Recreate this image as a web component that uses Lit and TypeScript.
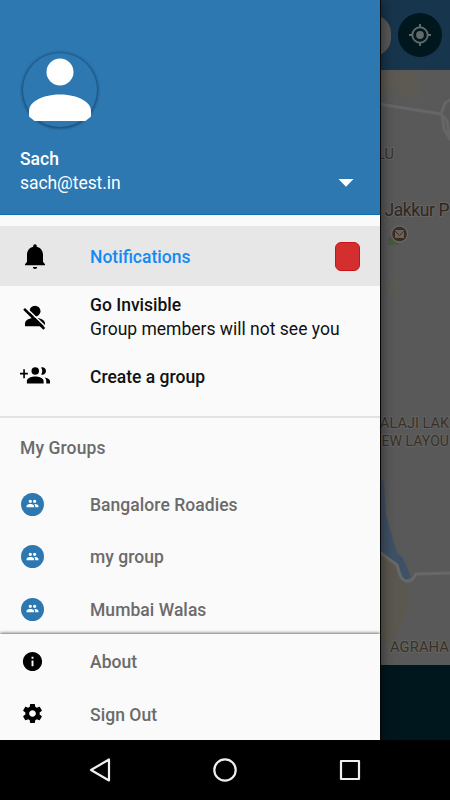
import { LitElement, html, css, svg } from "lit";
import { customElement } from "lit/decorators.js";

const groupGlyph = svg`<path d="M16 11c1.66 0 2.99-1.34 2.99-3S17.66 5 16 5s-3 1.34-3 3 1.34 3 3 3zm-8 0c1.66 0 2.99-1.34 2.99-3S9.66 5 8 5 5 6.34 5 8s1.34 3 3 3zm0 2c-2.33 0-7 1.17-7 3.5V19h14v-2.5C15 14.17 10.33 13 8 13zm8 0c-.29 0-.62.02-.97.05 1.16.84 1.97 1.97 1.97 3.45V19h6v-2.5c0-2.33-4.67-3.5-7-3.5z"/>`;

const icons = {
  bell: svg`<path d="M12 2.500c-.9 0-1.400.6-1.400 1.400v.7C7.600 5.300 5.600 7.800 5.600 11v5.500L4 18.500v.9h16v-.9l-1.600-2V11c0-3.200-2-5.700-5-6.400v-.7c0-.8-.5-1.400-1.400-1.400zM10.300 20.700h3.400c0 .9-.7 1.600-1.700 1.600s-1.700-.7-1.700-1.600z"/>`,
  personOff: svg`<circle cx="12" cy="8.100" r="4.400"/><path d="M12 13.400c-2.670 0-8 1.340-8 4.400v2.400h16v-2.400c0-3.060-5.330-4.400-8-4.400z"/><path d="M4.600 5.200 21.400 21.400" stroke="#fafafa" stroke-width="1.300" fill="none"/><path d="M3.300 6.300 19.400 22.300" stroke="#000" stroke-width="2.100" fill="none"/>`,
  groupAdd: svg`<path d="M6.300 9.400H3.900V6.500H2.600v2.900H0v1.400h2.600v2.900h1.300v-2.900h2.400zM17.800 11c1.660 0 2.990-1.340 2.990-3S19.460 5 17.800 5c-.32 0-.63.05-.91.14.57.81.9 1.790.9 2.860s-.34 2.040-.9 2.860c.28.09.59.14.91.14z" /><circle cx="12.200" cy="8" r="3"/><path d="M19.620 13.160c.83.73 1.380 1.660 1.380 2.840v2h3v-2c0-1.540-2.370-2.490-4.380-2.840zM12.200 12.300c-2.400 0-6.700 1-6.700 3.700v2h13.400v-2c0-2.700-4.300-3.700-6.700-3.700z"/>`,
  info: svg`<path d="M12 2C6.480 2 2 6.480 2 12s4.480 10 10 10 10-4.480 10-10S17.520 2 12 2zm1 15h-2v-6h2v6zm0-8h-2V7h2v2z"/>`,
  gear: svg`<path d="M19.430 12.980c.04-.32.07-.64.07-.98s-.03-.66-.07-.98l2.110-1.650c.19-.15.24-.42.12-.64l-2-3.460c-.12-.22-.39-.3-.61-.22l-2.490 1c-.52-.4-1.080-.73-1.690-.98l-.38-2.650C14.460 2.180 14.250 2 14 2h-4c-.25 0-.46.18-.49.42l-.38 2.650c-.61.25-1.170.59-1.690.98l-2.490-1c-.23-.09-.49 0-.61.22l-2 3.460c-.13.22-.07.49.12.64l2.110 1.650c-.04.32-.07.65-.07.98s.03.66.07.98l-2.110 1.650c-.19.15-.24.42-.12.64l2 3.460c.12.22.39.3.61.22l2.490-1c.52.4 1.080.73 1.690.98l.38 2.650c.03.24.24.42.49.42h4c.25 0 .46-.18.49-.42l.38-2.650c.61-.25 1.170-.59 1.690-.98l2.490 1c.23.09.49 0 .61-.22l2-3.460c.12-.22.07-.49-.12-.64l-2.110-1.650zM12 15.500c-1.930 0-3.500-1.570-3.500-3.500s1.570-3.500 3.500-3.500 3.500 1.570 3.500 3.500-1.570 3.500-3.500 3.500z"/>`,
};

@customElement("map-backdrop")
class MapBackdrop extends LitElement {
  static styles = css`
    :host { display: flex; flex-direction: column; height: 740px; background: #00171d; overflow: hidden; }
    .bar { height: 70px; display: flex; align-items: center; justify-content: flex-end; gap: 7px; padding-right: 8px; box-sizing: border-box; background: #17354d; }
    .search { width: 350px; height: 41px; border-radius: 18px; background: #585858; }
    .locate { width: 44px; height: 44px; border-radius: 50%; background: #00171d; display: flex; align-items: center; justify-content: center; }
    svg { display: block; }
    .map { height: 595px; width: 450px; }
    text { font-family: Roboto, sans-serif; paint-order: stroke; stroke: #646464; stroke-width: 2px; stroke-linejoin: round; fill: #3a3125; }
    .place { fill: #35261d; }
  `;
  render() {
    return html`
      <div class="bar">
        <div class="search"></div>
        <div class="locate">
          <svg width="24" height="24" viewBox="0 0 24 24" fill="none" stroke="#626a6c" stroke-width="1.900">
            <circle cx="12" cy="12" r="7.700" /><circle cx="12" cy="12" r="3.900" fill="#626a6c" stroke="none" />
            <path d="M12 1v4M12 19v4M1 12h4M19 12h4" />
          </svg>
        </div>
      </div>
      <svg class="map" viewBox="0 70 450 595">
        <rect y="70" width="450" height="595" fill="#595959" />
        <path d="M370 70H418V100L398 95 397 87H392L388 93 370 91Z" fill="#5d5a53" />
        <path d="M370 100 385 105 441 114 447 121 450 140" fill="none" stroke="#666" stroke-width="3" />
        <path d="M441 114 445 103 452 99M442 115 444 129 452 142" fill="none" stroke="#666" stroke-width="3" />
        <path d="M391 278H399V293H391Z" fill="#5b5a54" />
        <path d="M370 553H382L399 566 407 581 409 605 392 645H370Z" fill="#5b5850" />
        <path d="M378 474 384 482 386 515 397 553 403 558 411 577 405 581 399 576 397 565 378 550Z" fill="#3f5166" />
        <path d="M378 551 397 565 400 575Q403 582 409 581 413 580 416 574L450 573" fill="none" stroke="#686868" stroke-width="3" />
        <path d="M388 238 396 234 399 245 388 245Z" fill="#4b573f" />
        <text x="377" y="159" font-size="14.500">LU</text>
        <text class="place" x="384.500" y="216" font-size="17.500" textLength="65" lengthAdjust="spacing">Jakkur P</text>
        <circle cx="399.500" cy="234" r="8" fill="#3e2b22" stroke="#666" stroke-width="1.500" />
        <rect x="395" y="230" width="9" height="8" fill="#6a625e" />
        <path d="M395 231 399.500 235.500 404 231" fill="none" stroke="#3e2b22" stroke-width="1" />
        <text x="380" y="428" font-size="15.500" textLength="69" lengthAdjust="spacingAndGlyphs">ALAJI LAK</text>
        <text x="381.500" y="446" font-size="15.500" textLength="67.500" lengthAdjust="spacingAndGlyphs">EW LAYOU</text>
        <text x="390" y="651.500" font-size="15.500" textLength="59" lengthAdjust="spacingAndGlyphs">AGRAHA</text>
      </svg>
    `;
  }
}

@customElement("nav-drawer")
class NavDrawer extends LitElement {
  static styles = css`
    :host { display: flex; flex-direction: column; width: 380px; height: 740px; background: #fafafa; box-shadow: 0 0 14px rgba(0, 0, 0, 0.6), 1px 0 0 #0a0a0a; font: 500 17.500px/24px Roboto, sans-serif; color: #111; }
    svg { display: block; flex: none; }
    .head { height: 215px; box-sizing: border-box; padding: 50px 20px 0; background: #2d78b1; border-bottom: 1px solid #0b6fae; color: #fff; }
    .name { margin-top: 17px; }
    .account { display: flex; justify-content: space-between; align-items: center; font-weight: 400; padding-right: 6px; letter-spacing: -0.06px; }
    .menu { padding-top: 11px; height: 190px; box-sizing: content-box; border-bottom: 2px solid #e2e2e2; }
    .row { display: flex; align-items: center; box-sizing: border-box; padding: 0 20px; height: 60px; }
    .row.active { background: #e7e7e7; color: #128af5; }
    .icon { width: 70px; flex: none; }
    .label { flex: 1; padding-top: 2px; }
    .sub { font-weight: 400; }
    .badge { width: 25px; height: 29px; box-sizing: border-box; background: #d32f2f; border: 1px solid #cb1219; border-radius: 6px; }
    .title { padding: 18px 20px 0; height: 60px; box-sizing: border-box; color: #6b6b6b; letter-spacing: 0.1px; }
    .item { display: flex; align-items: center; height: 52.500px; padding: 0 20px; color: #6b6b6b; letter-spacing: 0.05px; }
    .item .label { padding-top: 0.500px; }
    .disc { width: 23px; height: 23px; margin-left: 1px; border-radius: 50%; background: #2d78b1; display: flex; align-items: center; justify-content: center; }
    .disc svg { margin-top: -1px; }
    .footer { position: absolute; top: 634px; left: 0; width: 380px; height: 106px; background: #fafafa; box-shadow: 0 -1px 3px rgba(0, 0, 0, 0.55); padding-top: 1px; box-sizing: border-box; clip-path: inset(-6px 0 0 0); }
    .footer svg { margin-left: 1px; }
    .footer .label { padding-top: 1.500px; }
  `;
  icon(shape: unknown, size = 30) {
    return html`<svg width=${size} height=${size} viewBox="0 0 24 24">${shape}</svg>`;
  }
  render() {
    return html`
      <div class="head">
        <svg width="80" height="80" viewBox="0 0 80 80">
          <defs>
            <filter id="soft" x="-20%" y="-20%" width="140%" height="140%"><feGaussianBlur stdDeviation="1.200" /></filter>
          </defs>
          <circle cx="40" cy="40.500" r="38.600" fill="#1d5280" filter="url(#soft)" />
          <circle cx="40" cy="40" r="37" fill="#2d78b1" />
          <circle cx="40" cy="22" r="13.500" fill="#fff" />
          <path d="M9 61C9 51 24 44.500 40 44.500S71 51 71 61V66.500L65.500 71H14.500L9 66.500Z" fill="#fff" />
        </svg>
        <div class="name">Sach</div>
        <div class="account"><span>sach@test.in</span>
          <svg width="16" height="8" viewBox="0 0 16 8"><path d="M.5 0h15L8 7.700Z" fill="#fff" /></svg>
        </div>
      </div>
      <div class="menu">
        <div class="row active"><div class="icon">${this.icon(icons.bell)}</div><div class="label">Notifications</div><div class="badge"></div></div>
        <div class="row"><div class="icon">${this.icon(icons.personOff)}</div><div class="label">Go Invisible<div class="sub">Group members will not see you</div></div></div>
        <div class="row"><div class="icon">${this.icon(icons.groupAdd)}</div><div class="label">Create a group</div></div>
      </div>
      <div class="title">My Groups</div>
      ${["Bangalore Roadies", "my group", "Mumbai Walas"].map(
        (name) => html`<div class="item"><div class="icon"><div class="disc">
          <svg width="13" height="13" viewBox="0 0 24 24" fill="#fff">${groupGlyph}</svg></div></div><div class="label">${name}</div></div>`
      )}
      <div class="footer">
        <div class="item"><div class="icon">${this.icon(icons.info, 23)}</div><div class="label">About</div></div>
        <div class="item"><div class="icon">${this.icon(icons.gear, 23)}</div><div class="label">Sign Out</div></div>
      </div>
    `;
  }
}

@customElement("app-root")
class AppRoot extends LitElement {
  static styles = css`
    :host { display: block; position: relative; width: 450px; height: 800px; overflow: hidden; background: #000; }
    nav-drawer { position: absolute; left: 0; top: 0; }
    .keys { position: relative; height: 60px; background: #000; display: flex; justify-content: center; align-items: center; }
    svg { display: block; }
  `;
  render() {
    return html`
      <map-backdrop></map-backdrop>
      <nav-drawer></nav-drawer>
      <div class="keys">
        <svg width="450" height="60" viewBox="0 0 450 60" fill="none" stroke="#eee" stroke-width="2.200" stroke-linejoin="round">
          <path d="M109 19.500V40.500L91 30Z" /><circle cx="225" cy="30" r="10.700" /><rect x="341" y="21" width="18" height="18" />
        </svg>
      </div>
    `;
  }
}
